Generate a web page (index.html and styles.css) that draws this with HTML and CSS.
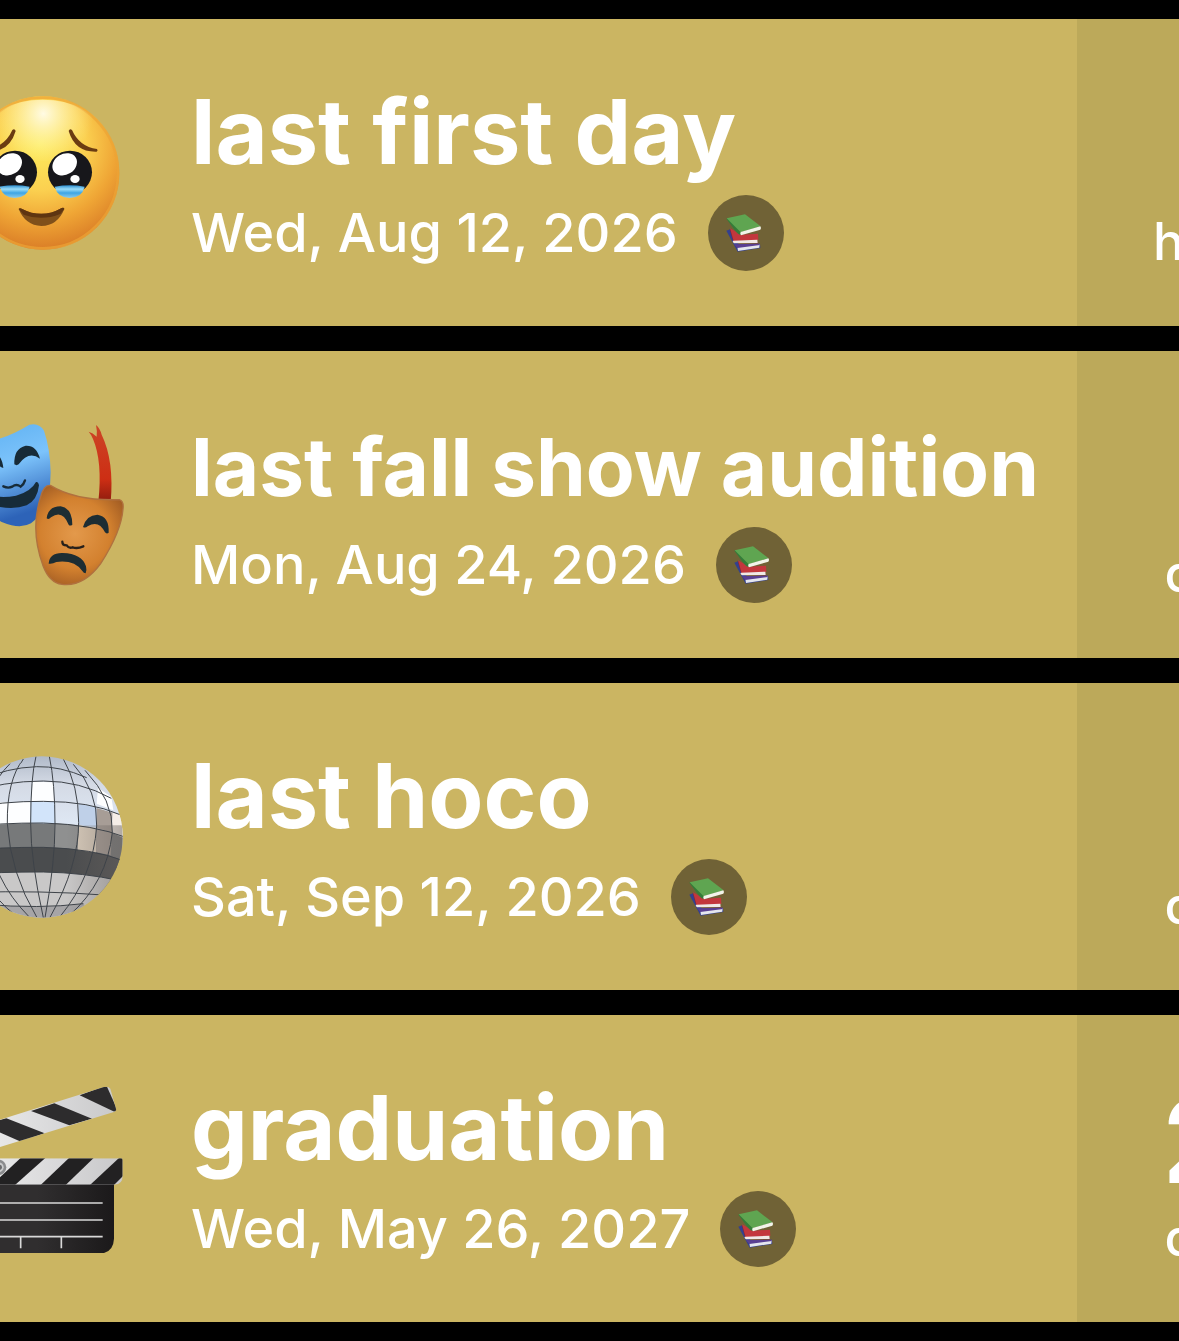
FILE: index.html
```
<!DOCTYPE html>
<html lang="en">
<head>
  <meta charset="UTF-8">
  <meta name="viewport" content="width=device-width, initial-scale=1.0">
  <title>Countdowns</title>
  <link rel="stylesheet" href="styles.css">
</head>
<body>

  <!-- shared books icon for the category badge -->
  <svg class="defs" aria-hidden="true">
    <symbol id="books" viewBox="36 31 228 228">
      <path fill="#34408f" d="M91 138l13-5 24 46 64-2 1 13-68 11z"/>
      <path fill="#e4e6ee" d="M124 187l67-9-1 11-64 10z"/>
      <path fill="#5a3f92" d="M114 179l76-2 2 4-68 9z"/>
      <path fill="#8d2230" d="M101 132l12 43 73 1v-4l-60-14z"/>
      <path fill="#c3373d" d="M102 131l34 19 50-3 1 19-74 3z"/>
      <path fill="#f0e9e6" d="M111 168l73-3 1 10-71 1q-6-4-3-8z"/>
      <path fill="#357c39" d="M91 102l6-2 39 43-2 8q-8-2-14-10z"/>
      <path fill="#5fa551" d="M92 101l55-12 47 36-60 18z"/>
      <path fill="#f2f4ea" d="M134 142l59-17q4 5 0 10l-58 17q-4-5-1-10z"/>
    </symbol>
  </svg>

  <main class="screen">
    <ul class="countdowns">

      <li class="event">
        <svg class="event-icon" viewBox="-123 26 504 504" aria-hidden="true">
          <defs>
            <radialGradient id="face" gradientUnits="userSpaceOnUse" cx="118" cy="190" r="310">
              <stop offset="0" stop-color="#fdec5c"/>
              <stop offset=".45" stop-color="#fbd050"/>
              <stop offset=".75" stop-color="#efa535"/>
              <stop offset="1" stop-color="#dc8128"/>
            </radialGradient>
            <radialGradient id="shine" gradientUnits="userSpaceOnUse" cx="130" cy="100" r="150">
              <stop offset="0" stop-color="#fffbe4"/>
              <stop offset="1" stop-color="#fff6a0" stop-opacity="0"/>
            </radialGradient>
            <linearGradient id="tear" x1="0" y1="0" x2="0" y2="1">
              <stop offset="0" stop-color="#2d8fd0"/>
              <stop offset=".3" stop-color="#9adcf8"/>
              <stop offset=".6" stop-color="#3da5e4"/>
              <stop offset="1" stop-color="#8fcdea"/>
            </linearGradient>
          </defs>
          <circle cx="128" cy="278" r="230" fill="url(#face)"/>
          <circle cx="128" cy="278" r="226" fill="none" stroke="#eda434" stroke-width="8" opacity=".7"/>
          <ellipse cx="128" cy="150" rx="165" ry="92" fill="url(#shine)"/>
          <g fill="#6b3c12">
            <path d="M206 152q3-8 10-3 22 50 75 57 4 5-1 8-65 2-84-62z"/>
            <path d="M47 152q-3-8-10-3-22 50-75 57-4 5 1 8 65 2 84-62z"/>
          </g>
          <g id="eye">
            <ellipse cx="210" cy="276" rx="66" ry="65" fill="#17171b"/>
            <path fill="url(#tear)" d="M164 319q46-8 90 0-8 33-45 34-36-1-45-34z"/>
            <ellipse cx="194" cy="252" rx="39" ry="31" transform="rotate(-32 194 252)" fill="#fff"/>
            <ellipse cx="225" cy="296" rx="14" ry="12" fill="#fff"/>
          </g>
          <use href="#eye" x="-165"/>
          <path fill="#80501a" d="M56 386q3-4 9-1 61 32 120-2 7-3 8 3-20 50-69 51-48-2-68-51z"/>
          <path fill="#5f3511" d="M56 386q3-4 9-1 61 32 120-2 7-3 8 3l-12 15q-56 22-110 2z"/>
        </svg>
        <div class="event-info">
          <h2>last first day</h2>
          <div class="event-date">
            <time datetime="2026-08-12">Wed, Aug 12, 2026</time>
            <span class="badge"><svg aria-hidden="true"><use href="#books"/></svg></span>
          </div>
        </div>
        <div class="event-left">
          <span class="unit">hours</span>
        </div>
      </li>

      <li class="event">
        <svg class="event-icon" viewBox="-123 32 504 504" aria-hidden="true">
          <defs>
            <linearGradient id="blue" x1="0" y1="0" x2=".3" y2="1">
              <stop offset="0" stop-color="#5aaef0"/>
              <stop offset=".5" stop-color="#7cc3fb"/>
              <stop offset="1" stop-color="#2d63b8"/>
            </linearGradient>
            <radialGradient id="orange" gradientUnits="userSpaceOnUse" cx="225" cy="370" r="190">
              <stop offset="0" stop-color="#e3994b"/>
              <stop offset=".55" stop-color="#d3812f"/>
              <stop offset="1" stop-color="#93511f"/>
            </radialGradient>
            <linearGradient id="ribbon" x1="0" y1="0" x2="0" y2="1">
              <stop offset="0" stop-color="#cc4526"/>
              <stop offset=".7" stop-color="#cd2e14"/>
              <stop offset="1" stop-color="#8d1c0e"/>
            </linearGradient>
          </defs>
          <path fill="url(#ribbon)" d="M266 64q12 3 24 15 2-17-2-35 12 10 17 29 38 78 27 203l-37-2q13-120-16-188-4-12-13-22z"/>
          <path fill="url(#blue)" d="M-120 95Q-20 110 88 43q30-7 44 18 18 52 20 124 0 110-59 154-32 19-86-3Q-90 285-120 95z"/>
          <g fill="#172b38">
            <path d="M43 162q-2-48 34-56 32-2 43 39-34-25-64 17-6 5-13 0z"/>
            <path d="M10 173q-4-42-34-49-24 0-34 34 36-16 60 12z"/>
            <path d="M-60 245q50 22 108 11 45-12 60-41 7-1 9 10-5 45-37 60-56 20-140-12z"/>
          </g>
          <path d="M10 228q14 7 27 1 12-10 25 0 10-8 13-19" fill="none" stroke="#172b38" stroke-width="7" stroke-linecap="round"/>
          <path fill="url(#orange)" stroke="#b0713f" stroke-width="4" d="M151 225q76 47 207 43 14 4 11 28-5 68-67 164-51 70-116 62-38-5-57-56-39-106-8-203 9-40 30-38z"/>
          <g fill="#1d2d33">
            <path d="M140 324q4-36 42-36 35 6 35 55-7 5-11 0-19-47-53-22-7 8-13 3z"/>
            <path d="M249 350q10-36 43-37 36 5 34 54-6 5-11-1-19-39-52-18-7 6-14 2z"/>
            <path d="M146 460q2-33 42-32 58 2 70 40 3 13-1 21-6 0-10-7-24-34-78-27-12 7-23 5z"/>
          </g>
          <path d="M187 394q0 11 13 11 7 10 18 6 14 5 32-3" fill="none" stroke="#27201a" stroke-width="7" stroke-linecap="round"/>
        </svg>
        <div class="event-info">
          <h2><span class="long">last fall show audition</span></h2>
          <div class="event-date">
            <time datetime="2026-08-24">Mon, Aug 24, 2026</time>
            <span class="badge"><svg aria-hidden="true"><use href="#books"/></svg></span>
          </div>
        </div>
        <div class="event-left">
          <span class="unit">days</span>
        </div>
      </li>

      <li class="event">
        <svg class="event-icon" viewBox="-123 38 504 504" aria-hidden="true">
          <defs>
            <clipPath id="ball"><circle cx="126" cy="290" r="242"/></clipPath>
            <linearGradient id="ball-top" x1="0" y1="0" x2="0" y2="1">
              <stop offset="0" stop-color="#a9b3c3"/>
              <stop offset=".35" stop-color="#d4dae5"/>
              <stop offset="1" stop-color="#e4effc"/>
            </linearGradient>
            <linearGradient id="ball-edge" x1="0" y1="0" x2="1" y2="0">
              <stop offset=".65" stop-color="#6d6662" stop-opacity="0"/>
              <stop offset="1" stop-color="#6d6662" stop-opacity=".5"/>
            </linearGradient>
          </defs>
          <g clip-path="url(#ball)">
            <path fill="url(#ball-top)" d="M-130 30h520v290h-520z"/>
            <path fill="#77797a" d="M-120 262Q0 247 130 248q150 4 250 44v100h-500z"/>
            <path fill="#4a4c4e" d="M-120 332Q0 320 130 321q150 4 240 40v100h-490z"/>
            <path fill="#c9c8c8" d="M-115 404Q0 394 130 395q120 2 230 26v140h-475z"/>
            <path fill="#a6a5a7" d="M-50 492q170 14 300-2l50 60H-50z"/>
            <g fill="#fdfeff">
              <path d="M99 124l60 2 4 58-71-1z"/>
              <path d="M-10 186l100-1v63l-120 6z"/>
              <path d="M290 190l50 20-6-40-40-28z"/>
            </g>
            <path fill="#d2e4fa" d="M92 185l73-1v66l-73-1z"/>
            <path fill="#bfd0e8" d="M236 190l54 10v62l-54-8z"/>
            <path fill="#d8cbbb" d="M236 255l54 8-2 74-55-8z"/>
            <path fill="#a79d96" d="M290 203l48 14-2 60-46-14zM290 264l46 13-4 68-44-10z"/>
            <path fill="#f5eee8" d="M338 215l35 13v66l-37-17z"/>
            <path fill="#8f9090" d="M163 249l72 5-4 73-68-6z"/>
            <path fill="url(#ball-edge)" d="M-116 255h484v280h-484z"/>
            <!-- mirror grid -->
            <g fill="none" stroke="#3e4349" stroke-width="3">
              <path d="M-60 120Q20 82 110 79q70-2 150 33"/>
              <path d="M-100 160Q10 122 130 122q110 0 204 52"/>
              <path d="M-116 206Q10 182 130 183q140 0 230 40"/>
              <path d="M-120 262Q0 247 130 248q150 4 250 44"/>
              <path d="M-120 332Q0 320 130 321q150 4 240 40"/>
              <path d="M-115 404Q0 394 130 395q120 2 230 26"/>
              <path d="M-90 456q220-6 400 8"/>
              <path d="M-50 492q170 14 300-2"/>
              <path d="M108 48Q92 110 92 250q0 110 38 282"/>
              <path d="M148 48q17 80 17 202 0 120-30 282"/>
              <path d="M70 56Q20 120 22 250q10 150 88 280"/>
              <path d="M190 56q46 80 46 190 0 130-86 285"/>
              <path d="M30 70Q-50 150-42 260q20 160 128 268"/>
              <path d="M220 72q74 80 70 185-10 150-110 272"/>
              <path d="M-10 90q-90 80-84 190 30 160 140 245"/>
              <path d="M255 90q86 90 82 186-16 150-130 250"/>
            </g>
          </g>
        </svg>
        <div class="event-info">
          <h2>last hoco</h2>
          <div class="event-date">
            <time datetime="2026-09-12">Sat, Sep 12, 2026</time>
            <span class="badge"><svg aria-hidden="true"><use href="#books"/></svg></span>
          </div>
        </div>
        <div class="event-left">
          <span class="unit">days</span>
        </div>
      </li>

      <li class="event">
        <svg class="event-icon" viewBox="-123 44 504 504" aria-hidden="true">
          <defs>
            <linearGradient id="slate" x1="0" y1="0" x2="1" y2="0">
              <stop offset=".5" stop-color="#302e2f"/>
              <stop offset="1" stop-color="#1b191a"/>
            </linearGradient>
            <linearGradient id="stripe" x1="0" y1="0" x2="1" y2="0">
              <stop offset="0" stop-color="#f1f1f1"/>
              <stop offset="1" stop-color="#c8c8ca"/>
            </linearGradient>
            <clipPath id="arm"><path d="M-118 185L312 50q14-3 19 5l18 64-5 5-462 142z"/></clipPath>
            <clipPath id="bar"><path d="M-118 264h481q5 0 5 5v50q-1 22-24 24h-462z"/></clipPath>
          </defs>
          <g clip-path="url(#arm)">
            <path fill="url(#stripe)" d="M-120 40h480v240h-480z"/>
            <g fill="#2d2c2d">
              <path d="M239 75l80-30 36 80-15-2z"/>
              <path d="M93 122l70-23 113 46-68 20z"/>
              <path d="M-52 164l71-20 115 45-71 25z"/>
              <path d="M-200 210l70-22 116 46-70 22z"/>
            </g>
          </g>
          <path fill="url(#slate)" d="M-118 340h460v165q-2 42-42 45h-378q-38-2-40-42z"/>
          <g clip-path="url(#bar)">
            <path fill="url(#stripe)" d="M-120 260h490v84h-490z"/>
            <g fill="#222122">
              <path d="M63 262h74l-92 82h-70z"/>
              <path d="M208 262h74l-85 82h-75z"/>
              <path d="M358 262h12v54l-28 28h-72z"/>
              <path d="M-85 262h74l-80 82h-75z"/>
            </g>
          </g>
          <circle cx="-4" cy="291" r="23" fill="#8b8c8e"/>
          <circle cx="-4" cy="291" r="15" fill="#c9cacb"/>
          <circle cx="-2" cy="291" r="8" fill="#6b6c6e"/>
          <path d="M-90 398h398M-90 449h398M-90 499h398M62 500v34M184 500v34" fill="none" stroke="#d9d9d9" stroke-width="5"/>
        </svg>
        <div class="event-info">
          <h2>graduation</h2>
          <div class="event-date">
            <time datetime="2027-05-26">Wed, May 26, 2027</time>
            <span class="badge"><svg aria-hidden="true"><use href="#books"/></svg></span>
          </div>
        </div>
        <div class="event-left">
          <span class="number">21</span>
          <span class="unit">days</span>
        </div>
      </li>

    </ul>
  </main>

</body>
</html>
```
FILE: styles.css
```
* {
  box-sizing: border-box;
  margin: 0;
  padding: 0;
}

body {
  background-color: #000;
  color: #fff;
  font-family: Inter, "Liberation Sans", sans-serif;
}

.defs {
  display: none;
}

.screen {
  overflow: hidden;
  padding: 19px 0;
}

/* the list runs past both sides of the screen */
.countdowns {
  display: flex;
  flex-direction: column;
  gap: 25px;
  margin: 0 -192px 0 -41px;
  list-style: none;
}

.event {
  display: flex;
  align-items: center;
  min-height: 307px;
  background-color: #cbb562;
}

.event-icon {
  flex: none;
  width: 168px;
  height: 168px;
}

.event-info {
  flex: 1;
  display: flex;
  flex-direction: column;
  gap: 6px;
  padding-left: 64px;
  white-space: nowrap;
}

.event-info h2 {
  font-size: 90px;
  font-weight: 700;
  line-height: 114px;
}

.event-info .long {
  font-size: 80px;
  line-height: 80px;
}

.event-date {
  display: flex;
  align-items: center;
  gap: 30px;
  font-size: 54px;
  font-weight: 500;
}

.badge {
  width: 76px;
  height: 76px;
  border-radius: 50%;
  background-color: #706236;
}

.badge svg {
  display: block;
  width: 100%;
  height: 100%;
}

.event-left {
  flex: 0 0 294px;
  align-self: stretch;
  display: flex;
  flex-direction: column;
  align-items: center;
  justify-content: flex-end;
  padding-bottom: 46px;
  background-color: #bca95a;
}

.number {
  font-size: 116px;
  font-weight: 700;
  line-height: 118px;
}

.unit {
  font-size: 52px;
  font-weight: 500;
  line-height: 76px;
}
```
